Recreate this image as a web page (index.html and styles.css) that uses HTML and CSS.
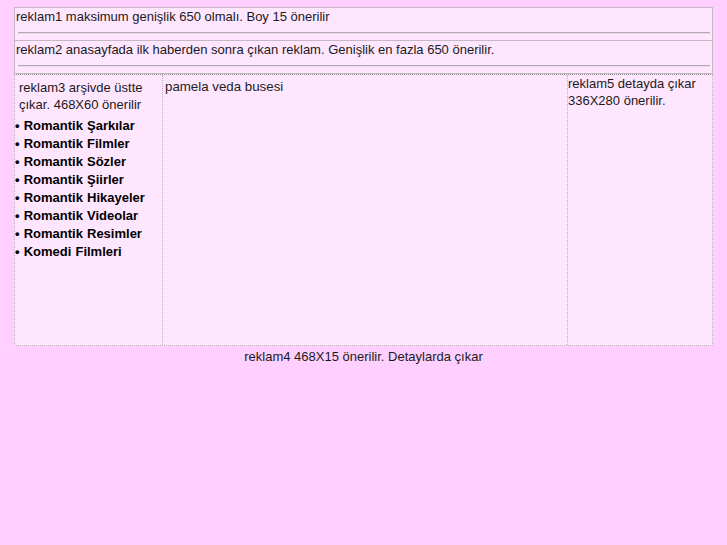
FILE: index.html
```html
<!DOCTYPE html>
<html>
<head>
<meta charset="utf-8">
<link rel="stylesheet" href="styles.css">
</head>
<body>
<div class="page">
  <div class="ads">
    <div class="ad-row">
      <div class="ad-text">reklam1 maksimum genişlik 650 olmalı. Boy 15 önerilir</div>
      <hr class="rule">
    </div>
    <div class="ad-row">
      <div class="ad-text">reklam2 anasayfada ilk haberden sonra çıkan reklam. Genişlik en fazla 650 önerilir.</div>
      <hr class="rule">
    </div>
  </div>
  <div class="main">
    <div class="col left">
      <div class="ad3">reklam3 arşivde üstte çıkar. 468X60 önerilir</div>
      <ul class="links">
        <li>• Romantik Şarkılar</li>
        <li>• Romantik Filmler</li>
        <li>• Romantik Sözler</li>
        <li>• Romantik Şiirler</li>
        <li>• Romantik Hikayeler</li>
        <li>• Romantik Videolar</li>
        <li>• Romantik Resimler</li>
        <li>• Komedi Filmleri</li>
      </ul>
    </div>
    <div class="col middle">pamela veda busesi</div>
    <div class="col right">reklam5 detayda çıkar 336X280 önerilir.</div>
  </div>
  <div class="footer">reklam4 468X15 önerilir. Detaylarda çıkar</div>
</div>
</body>
</html>
```

FILE: styles.css
```css
html, body {
  margin: 0;
  padding: 0;
  background: #ffd0ff;
  height: 100%;
}
body {
  font-family: "Liberation Sans", Arial, sans-serif;
  font-size: 13px;
  color: #1a1a1a;
}
.page {
  width: 699px;
  margin: 0 auto;
  padding-top: 7px;
}
.ads {
  border: 1px solid #c4b8c4;
  background: #ffe6ff;
}
.ad-row {
  height: 32px;
  padding: 0 1px;
}
.ad-row + .ad-row {
  border-top: 1px solid #c4b8c4;
}
.ad-text {
  padding-top: 1px;
  line-height: 16px;
}
.rule {
  margin: 7px 1px 0 2px;
  border: 0;
  border-top: 1px solid #b4a8b4;
  border-bottom: 1px solid #e8dce8;
  height: 0;
}
.main {
  display: grid;
  grid-template-columns: 148px 405px 1fr;
  height: 270px;
  border: 1px dotted #b8b0b8;
  border-top: 1px dotted #909090;
  background: #ffe6ff;
}
.col {
  border-right: 1px dotted #b8b0b8;
}
.col:last-child {
  border-right: 0;
}
.left {
  padding-top: 4px;
}
.ad3 {
  padding: 0 6px 0 4px;
  line-height: 17px;
}
.links {
  list-style: none;
  margin: 4px 0 0 0;
  padding: 0;
  font-weight: bold;
  line-height: 18px;
  color: #000;
  word-spacing: 0.5px;
}
.middle {
  padding: 4px 2px;
  font-size: 13.3px;
  line-height: 15px;
  color: #222;
}
.right {
  padding: 0;
  line-height: 17px;
}
.footer {
  text-align: center;
  padding-top: 3px;
  line-height: 15px;
}
```
